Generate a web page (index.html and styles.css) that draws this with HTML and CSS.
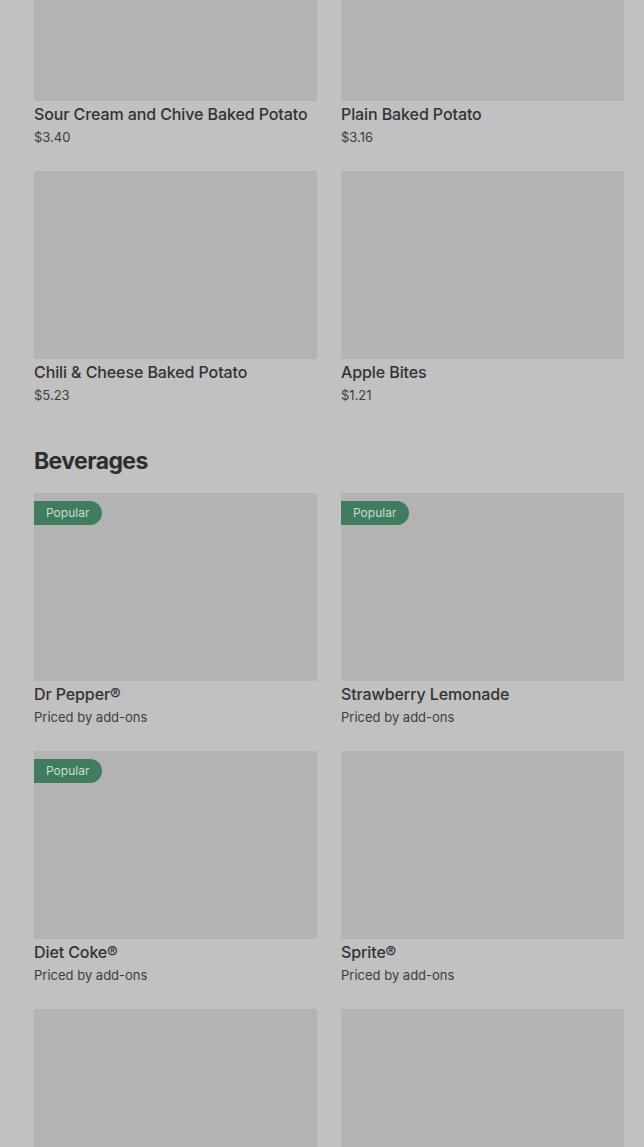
FILE: index.html
```html
<!DOCTYPE html>
<html>
<head>
<meta charset="utf-8">
<link rel="stylesheet" href="styles.css">
</head>
<body>
<main class="page">
  <section class="section first">
    <div class="grid">
      <div class="card"><div class="thumb"></div><div class="title">Sour Cream and Chive Baked Potato</div><div class="price">$3.40</div></div>
      <div class="card"><div class="thumb"></div><div class="title">Plain Baked Potato</div><div class="price">$3.16</div></div>
      <div class="card"><div class="thumb"></div><div class="title">Chili &amp; Cheese Baked Potato</div><div class="price">$5.23</div></div>
      <div class="card"><div class="thumb"></div><div class="title">Apple Bites</div><div class="price">$1.21</div></div>
    </div>
  </section>
  <section class="section">
    <h2 class="heading">Beverages</h2>
    <div class="grid">
      <div class="card"><div class="thumb"><span class="badge">Popular</span></div><div class="title">Dr Pepper®</div><div class="price">Priced by add-ons</div></div>
      <div class="card"><div class="thumb"><span class="badge">Popular</span></div><div class="title">Strawberry Lemonade</div><div class="price">Priced by add-ons</div></div>
      <div class="card"><div class="thumb"><span class="badge">Popular</span></div><div class="title">Diet Coke®</div><div class="price">Priced by add-ons</div></div>
      <div class="card"><div class="thumb"></div><div class="title">Sprite®</div><div class="price">Priced by add-ons</div></div>
      <div class="card"><div class="thumb"></div></div>
      <div class="card"><div class="thumb"></div></div>
    </div>
  </section>
</main>
</body>
</html>
```
FILE: styles.css
```css
html, body {
  margin: 0;
  padding: 0;
  background: #c1c1c1;
  overflow: hidden;
}
body {
  font-family: Inter, "Noto Sans", sans-serif;
  color: #2e2e2e;
}
.page {
  padding: 0 20px 0 34px;
}
.section.first {
  margin-top: -87px;
}
.grid {
  display: grid;
  grid-template-columns: 283px 283px;
  column-gap: 24px;
  row-gap: 24px;
}
.card {
  display: flex;
  flex-direction: column;
}
.thumb {
  position: relative;
  height: 188px;
  background: #b3b3b3;
}
.badge {
  position: absolute;
  left: 0;
  top: 8px;
  height: 24px;
  line-height: 24px;
  padding: 0 13px 0 12px;
  background: #3f7d5e;
  color: #c9ddd2;
  font-size: 12px;
  border-radius: 0 12px 12px 0;
}
.title {
  margin-top: 3px;
  font-size: 16px;
  line-height: 20px;
  font-weight: 500;
  letter-spacing: -0.1px;
  color: #333333;
}
.price {
  margin-top: 3px;
  font-size: 13px;
  line-height: 20px;
  color: #3d3d3d;
}
.heading {
  margin: 40px 0 16px;
  font-size: 23px;
  line-height: 32px;
  font-weight: 700;
  letter-spacing: -0.6px;
  color: #2e2e2e;
}
```
